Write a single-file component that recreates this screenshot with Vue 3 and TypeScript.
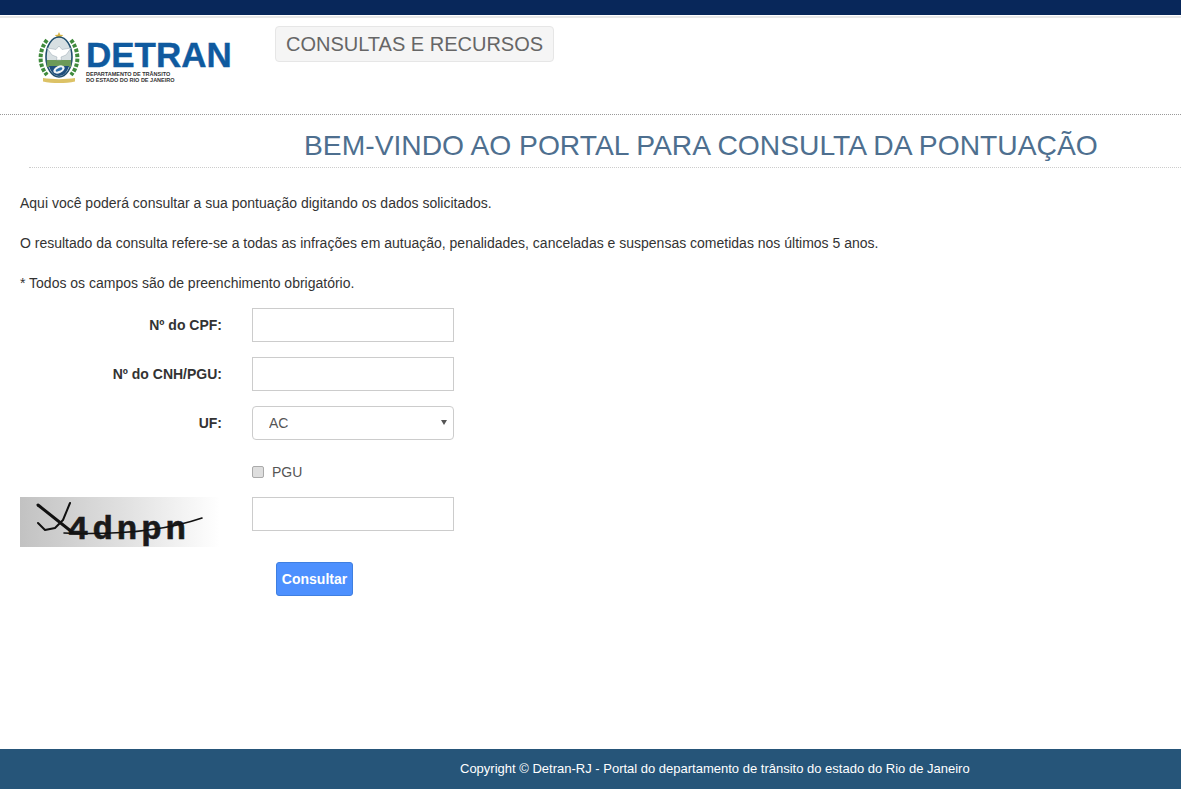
<script setup lang="ts">
import { ref } from 'vue';

const cpf = ref('');
const cnh = ref('');
const uf = ref('AC');
const pgu = ref(false);
const captcha = ref('');
const ufs = ['AC', 'AL', 'AM', 'AP', 'BA', 'CE', 'DF', 'ES', 'GO', 'MA', 'MG', 'MS', 'MT', 'PA', 'PB', 'PE', 'PI', 'PR', 'RJ', 'RN', 'RO', 'RR', 'RS', 'SC', 'SE', 'SP', 'TO'];
</script>

<template>
  <div class="page">
    <div class="top-bar"></div>

    <header class="header">
      <div class="logo">
        <svg class="crest" width="42" height="52" viewBox="0 0 42 52">
          <path d="M21 0l1.3 2.8 3 .3-2.3 2 .7 3-2.7-1.6-2.7 1.6.7-3-2.3-2 3-.3z" fill="#d6b347" />
          <g fill="none" stroke="#3f8a3c" stroke-width="4" stroke-dasharray="3.5 1.5">
            <path d="M9 8C1 18 0 33 9 43" />
            <path d="M33 8c8 10 9 25 0 35" />
          </g>
          <ellipse cx="21" cy="25" rx="13" ry="20" fill="#d7dfe2" stroke="#1f4e6e" stroke-width="1.6" />
          <path d="M8.8 28h24.4v7H8.8z" fill="#6c9a58" />
          <path d="M9 16l9 1.5 3-3.5 3 3.5 9-1.5-5 7-5 2 .5 3h-5l.5-3-5-2z" fill="#fff" stroke="#9aa9b2" stroke-width=".5" />
          <path d="M11 34h20c-2 7-6 10-10 10s-8-3-10-10z" fill="#1f4e7d" />
          <ellipse cx="21" cy="37.5" rx="6" ry="3.6" fill="#eef3f6" transform="rotate(-25 21 37.5)" />
          <ellipse cx="21" cy="37.5" rx="3.6" ry="1.5" fill="#2a6ea8" transform="rotate(-25 21 37.5)" />
          <path d="M5 46c9 1.5 23 1.5 32 0v3.5c-9 2-23 2-32 0z" fill="#dcc266" />
        </svg>
        <div class="logo-words">
          <div class="logo-name">DETRAN</div>
          <div class="logo-sub">DEPARTAMENTO DE TRÂNSITO<br />DO ESTADO DO RIO DE JANEIRO</div>
        </div>
      </div>
      <div class="menu-pill">CONSULTAS E RECURSOS</div>
    </header>

    <main class="content">
      <h1 class="title">BEM-VINDO AO PORTAL PARA CONSULTA DA PONTUAÇÃO</h1>

      <p class="first">Aqui você poderá consultar a sua pontuação digitando os dados solicitados.</p>
      <p>O resultado da consulta refere-se a todas as infrações em autuação, penalidades, canceladas e suspensas cometidas nos últimos 5 anos.</p>
      <p>* Todos os campos são de preenchimento obrigatório.</p>

      <form class="form" @submit.prevent>
        <label class="field-label" for="cpf">Nº do CPF:</label>
        <input id="cpf" v-model="cpf" class="control" type="text" />

        <label class="field-label" for="cnh">Nº do CNH/PGU:</label>
        <input id="cnh" v-model="cnh" class="control" type="text" />

        <label class="field-label" for="uf">UF:</label>
        <div class="select-wrap">
          <select id="uf" v-model="uf" class="control select">
            <option v-for="item in ufs" :key="item" :value="item">{{ item }}</option>
          </select>
          <span class="select-arrow"></span>
        </div>

        <span></span>
        <label class="check-line">
          <input v-model="pgu" class="check" type="checkbox" />
          <span>PGU</span>
        </label>

        <div class="captcha">
          <span class="captcha-text">4dnpn</span>
          <svg class="captcha-lines" width="200" height="50" viewBox="0 0 200 50">
            <g fill="none" stroke="#111" stroke-linecap="round" stroke-linejoin="round">
              <path d="M18 8l34 27" stroke-width="3" />
              <path d="M50 6l-7 17-8 8-10 2-7-7" stroke-width="2" />
              <path d="M44 36c50 2 100-2 138-15" stroke-width="1.6" />
            </g>
          </svg>
        </div>
        <input v-model="captcha" class="control captcha-input" type="text" />

        <span></span>
        <button class="submit" type="submit">Consultar</button>
      </form>
    </main>

    <footer class="footer">Copyright © Detran-RJ - Portal do departamento de trânsito do estado do Rio de Janeiro</footer>
  </div>
</template>

<style>
html,
body {
  margin: 0;
  background: #fff;
}
</style>

<style scoped>
.page {
  height: 789px;
  display: flex;
  flex-direction: column;
  font-family: "Liberation Sans", Arial, sans-serif;
  font-size: 14px;
  color: #333;
  overflow: hidden;
}

.top-bar {
  height: 15px;
  flex: none;
  margin-bottom: 3px;
  background: #08275a;
  box-shadow: 0 1px 0 #fff, 0 3px 0 #e8e8e8;
}

.header {
  height: 96px;
  flex: none;
  display: flex;
  align-items: flex-start;
  border-bottom: 1px dotted #999;
}

.logo {
  width: 275px;
  flex: none;
  display: flex;
  align-items: flex-start;
  gap: 6px;
  padding: 14px 0 0 38px;
  box-sizing: border-box;
}

.logo-words {
  padding-top: 8px;
}

.logo-name {
  font-size: 35px;
  line-height: 30px;
  font-weight: 700;
  color: #0f5a9f;
  -webkit-text-stroke: 0.4px #0f5a9f;
}

.logo-sub {
  margin-top: 1px;
  font-size: 5.5px;
  line-height: 6px;
  font-weight: 700;
  color: #333;
  white-space: nowrap;
}

.menu-pill {
  margin-top: 8px;
  height: 36px;
  box-sizing: border-box;
  padding: 0 10px;
  display: flex;
  align-items: center;
  font-size: 20px;
  color: #666;
  background: #f5f5f5;
  border: 1px solid #e6e6e6;
  border-radius: 4px;
}

.content {
  flex: 1;
  min-height: 0;
}

.title {
  margin: 0 0 0 29px;
  height: 53px;
  box-sizing: border-box;
  padding: 13px 0 0 275px;
  font-size: 28.25px;
  line-height: 35px;
  font-weight: 400;
  color: #4e6f8f;
  white-space: nowrap;
  border-bottom: 1px dotted #ccc;
}

p {
  margin: 0 0 20px 20px;
  line-height: 20px;
}

p.first {
  margin-top: 25px;
}

.form {
  margin-top: -5px;
  display: grid;
  grid-template-columns: 202px 202px;
  column-gap: 30px;
  row-gap: 15px;
  align-items: center;
  padding-left: 20px;
  width: 454px;
  box-sizing: border-box;
}

.field-label {
  text-align: right;
  font-weight: 700;
}

.control {
  display: block;
  width: 202px;
  height: 34px;
  box-sizing: border-box;
  padding: 0 16px;
  font: inherit;
  color: #555;
  background: #fff;
  border: 1px solid #ccc;
  outline: none;
}

.captcha-input {
  align-self: start;
}

.select-wrap {
  position: relative;
  width: 202px;
}

.select {
  border-radius: 4px;
  appearance: none;
}

.select-arrow {
  position: absolute;
  right: 7px;
  top: 14px;
  border-left: 3px solid transparent;
  border-right: 3px solid transparent;
  border-top: 5px solid #555;
}

.check-line {
  display: flex;
  align-items: center;
  gap: 8px;
  height: 20px;
  margin: 7px 0 0;
  color: #555;
}

.check {
  appearance: none;
  width: 12px;
  height: 12px;
  margin: 0;
  background: #dedede;
  border: 1px solid #aaa;
  border-radius: 2px;
}

.captcha {
  position: relative;
  width: 200px;
  height: 50px;
  align-self: start;
  background: linear-gradient(90deg, #c2c2c2, #e2e2e2 55%, #fff);
}

.captcha-lines {
  position: absolute;
  left: 0;
  top: 0;
}

.captcha-text {
  position: absolute;
  left: 48px;
  top: 20px;
  font-family: "Liberation Mono", monospace;
  font-size: 34px;
  line-height: 26px;
  font-weight: 700;
  letter-spacing: 4px;
  color: #1a1a1a;
  -webkit-text-stroke: 0.6px #1a1a1a;
}

.submit {
  justify-self: start;
  margin-left: 24px;
  width: 77px;
  height: 34px;
  padding: 0;
  font: inherit;
  font-weight: 700;
  color: #fff;
  background: #4d90fe;
  border: 1px solid #3f7fe0;
  border-radius: 3px;
}

.footer {
  height: 40px;
  flex: none;
  box-sizing: border-box;
  padding-left: 460px;
  line-height: 40px;
  font-size: 13px;
  color: #fff;
  background: #265579;
  white-space: nowrap;
}
</style>
